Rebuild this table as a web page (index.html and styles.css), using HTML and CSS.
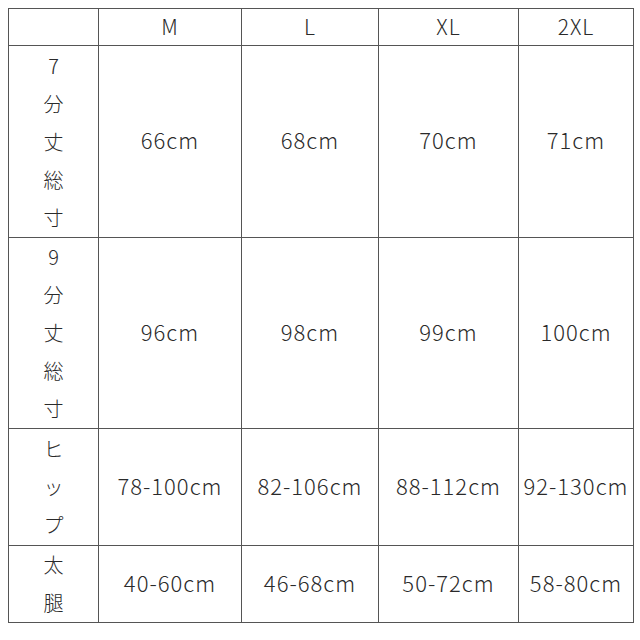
FILE: index.html
```html
<!DOCTYPE html>
<html lang="ja">
<head>
<meta charset="utf-8">
<link rel="stylesheet" href="styles.css">
</head>
<body>
<table class="size-table">
  <colgroup>
    <col class="c-label">
    <col class="c-m">
    <col class="c-l">
    <col class="c-xl">
    <col class="c-2xl">
  </colgroup>
  <tr class="r-head">
    <td></td><td>M</td><td>L</td><td>XL</td><td>2XL</td>
  </tr>
  <tr class="r-7">
    <td class="label">7<br>分<br>丈<br>総<br>寸</td><td>66cm</td><td>68cm</td><td>70cm</td><td>71cm</td>
  </tr>
  <tr class="r-9">
    <td class="label">9<br>分<br>丈<br>総<br>寸</td><td>96cm</td><td>98cm</td><td>99cm</td><td>100cm</td>
  </tr>
  <tr class="r-hip">
    <td class="label">ヒ<br>ッ<br>プ</td><td>78-100cm</td><td>82-106cm</td><td>88-112cm</td><td>92-130cm</td>
  </tr>
  <tr class="r-thigh">
    <td class="label">太<br>腿</td><td>40-60cm</td><td>46-68cm</td><td>50-72cm</td><td>58-80cm</td>
  </tr>
</table>
</body>
</html>
```

FILE: styles.css
```css
html, body {
  margin: 0;
  padding: 0;
  background: #ffffff;
}
body {
  padding: 8px 0 0 8px;
  font-family: "Noto Sans CJK JP", "Noto Sans", sans-serif;
  font-weight: 300;
  color: #2a2a2a;
}
.size-table {
  border-collapse: collapse;
  table-layout: fixed;
  width: 625px;
}
.c-label { width: 90px; }
.c-m { width: 143px; }
.c-l { width: 137px; }
.c-xl { width: 140px; }
.c-2xl { width: 115px; }
.size-table td {
  border: 1px solid #555555;
  padding: 0 0 4px 0;
  text-align: center;
  vertical-align: middle;
  font-size: 22px;
  letter-spacing: 1px;
  line-height: 1.2;
  white-space: nowrap;
}
.r-head { height: 37px; }
.r-head td {
  font-size: 21px;
  padding: 0;
}
.r-7 { height: 192px; }
.r-9 { height: 191px; }
.r-hip { height: 117px; }
.r-thigh { height: 77px; }
.size-table td.label {
  font-size: 20px;
  letter-spacing: 0;
  line-height: 38px;
  padding: 0;
}
```
